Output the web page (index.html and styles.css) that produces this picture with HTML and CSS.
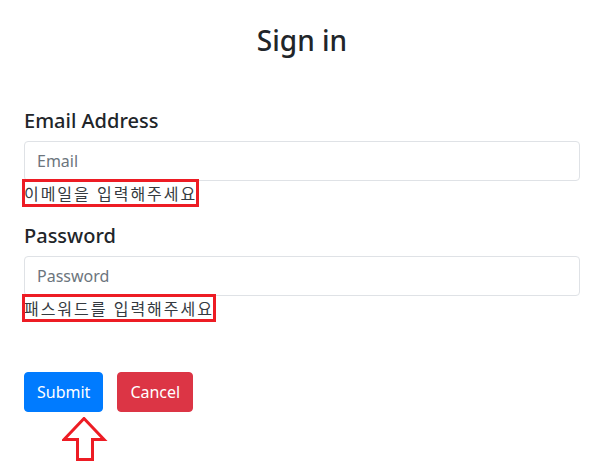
FILE: index.html
```html
<!DOCTYPE html>
<html lang="ko">
<head>
<meta charset="utf-8">
<title>Sign in</title>
<link rel="stylesheet" href="styles.css">
</head>
<body>
<div class="page">
  <h2 class="title">Sign in</h2>
  <form class="form">
    <div class="group">
      <label class="label" for="email">Email Address</label>
      <input class="input" id="email" type="text" placeholder="Email">
      <div class="hint"><span class="mark">이메일을 입력해주세요</span></div>
    </div>
    <div class="group">
      <label class="label" for="pw">Password</label>
      <input class="input" id="pw" type="password" placeholder="Password">
      <div class="hint"><span class="mark">패스워드를 입력해주세요</span></div>
    </div>
    <div class="actions">
      <button type="button" class="btn btn-primary">Submit</button>
      <button type="button" class="btn btn-danger">Cancel</button>
    </div>
    <div class="pointer">
      <svg width="46" height="46" viewBox="0 0 46 46">
        <path d="M22 1.5 L42 22.5 L30.5 22.5 L30.5 42.5 L15.5 42.5 L15.5 22.5 L2 22.5 Z" fill="none" stroke="#ed1c24" stroke-width="3" stroke-linejoin="miter"/>
      </svg>
    </div>
  </form>
</div>
</body>
</html>
```
FILE: styles.css
```css
* { box-sizing: border-box; }
html, body { margin: 0; background: #fff; }
body {
  font-family: "Noto Sans", "Noto Sans CJK KR", sans-serif;
  color: #212529;
  font-size: 16px;
}
.page {
  padding: 0 15px 0 24px;
}
.title {
  margin: 23px 0 0;
  font-size: 28px;
  line-height: 34px;
  font-weight: 500;
  text-align: center;
}
.form {
  margin-top: 52px;
}
.group {
  margin-bottom: 19px;
}
.label {
  display: block;
  font-size: 20px;
  line-height: 24px;
  font-weight: 500;
  margin-bottom: 8px;
}
.input {
  display: block;
  width: 100%;
  height: 40px;
  padding: 0 12px;
  border: 1px solid #dfe2e6;
  border-radius: 4px;
  font-family: inherit;
  font-size: 16px;
  color: #495057;
  background: #fff;
}
.input::placeholder { color: #6c757d; }
.hint {
  font-family: "Noto Sans CJK KR", sans-serif;
  font-size: 16px;
  line-height: 24px;
  height: 24px;
  color: #343a40;
}
.mark {
  display: inline-block;
  outline: 3px solid #ed1c24;
  outline-offset: -1px;
  letter-spacing: 1.95px;
}
.actions {
  display: flex;
  gap: 14px;
  margin-top: 52px;
}
.btn {
  height: 40px;
  padding: 0 12px;
  border: 1px solid transparent;
  border-radius: 4px;
  font-family: inherit;
  font-size: 16px;
  color: #fff;
  cursor: pointer;
}
.btn-primary { background: #007bff; border-color: #007bff; }
.btn-danger { background: #dc3545; border-color: #dc3545; }
.pointer {
  margin: 5px 0 0 38px;
  line-height: 0;
}
```
